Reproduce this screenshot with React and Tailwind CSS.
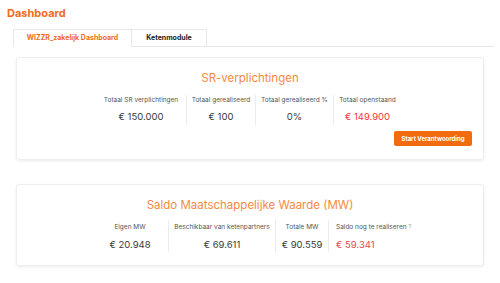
import React from "react";

const srStats = [
  { label: "Totaal SR verplichtingen", value: "€ 150.000", w: "w-[90px]" },
  { label: "Totaal gerealiseerd", value: "€ 100", w: "w-[69px]" },
  { label: "Totaal gerealiseerd %", value: "0%", w: "w-[78px]" },
  { label: "Totaal openstaand", value: "€ 149.900", w: "w-[68px]", red: true },
];

const mwStats = [
  { label: "Eigen MW", value: "€ 20.948", w: "w-[76px]" },
  { label: "Beschikbaar van ketenpartners", value: "€ 69.611", w: "w-[107px]" },
  { label: "Totale MW", value: "€ 90.559", w: "w-[53px]" },
];

export default function App() {
  return (
    <div className="w-[500px] h-[283px] overflow-hidden bg-white font-['Inter',sans-serif] text-[#444]">
      <div className="px-[7px] pt-[6px]">
        <h1 className="text-[11px] leading-[14px] font-bold text-[#f26a1b]">Dashboard</h1>
      </div>

      {/* tabs */}
      <div className="ml-[13px] mr-[6px] mt-[9px] flex border-b border-[#e8e8e8]">
        <div className="-mb-px h-[18px] w-[119px] flex items-center justify-center border border-[#e8e8e8] border-b-white bg-white text-[7px] font-bold text-[#f26a1b]">
          WIZZR_zakelijk Dashboard
        </div>
        <div className="h-[17px] w-[75px] flex items-center justify-center border border-l-0 border-b-0 border-[#e8e8e8] text-[7px] font-bold text-[#222]">
          Ketenmodule
        </div>
      </div>

      {/* SR card */}
      <div className="mx-[16px] mt-[10px] h-[103px] rounded-[3px] border border-[#eeeeee] shadow-[0_1px_3px_rgba(0,0,0,0.08)] pt-[12px]">
        <h2 className="text-center text-[11.5px] leading-[16px] text-[#f58a3f]">SR-verplichtingen</h2>
        <div className="mt-[9px] flex justify-center pr-[3px]">
          {srStats.map((s, i) => (
            <div key={s.label} className={`${s.w} h-[30px] text-center ${i > 0 ? "border-l border-[#ececec]" : ""}`}>
              <div className="text-[6.5px] leading-[10px] text-[#555]">{s.label}</div>
              <div className={`mt-[5px] text-[9.5px] leading-[14px] ${s.red ? "text-[#f2333d]" : "text-[#3a3a3a]"}`}>
                {s.value}
              </div>
            </div>
          ))}
        </div>
        <div className="mt-[6px] flex justify-end pr-[11px]">
          <button className="h-[15px] w-[78px] rounded-[2px] bg-[#f26b0f] text-[6px] font-bold text-white">
            Start Verantwoording
          </button>
        </div>
      </div>

      {/* MW card */}
      <div className="mx-[16px] mt-[24px] h-[82px] rounded-[3px] border border-[#eeeeee] shadow-[0_1px_3px_rgba(0,0,0,0.08)] pt-[12px]">
        <h2 className="text-center text-[11.5px] leading-[16px] text-[#f58a3f]">Saldo Maatschappelijke Waarde (MW)</h2>
        <div className="mt-[7px] flex justify-center pl-[8px]">
          {mwStats.map((s, i) => (
            <div key={s.label} className={`${s.w} h-[32px] text-center ${i > 0 ? "border-l border-[#ececec]" : ""}`}>
              <div className="text-[6.5px] leading-[14px] text-[#555]">{s.label}</div>
              <div className="mt-[4px] text-[9.5px] leading-[14px] text-[#3a3a3a]">{s.value}</div>
            </div>
          ))}
          <div className="w-[88px] h-[32px] pl-[7px] border-l border-[#ececec]">
            <div className="text-[6.5px] leading-[14px] text-[#555]">
              Saldo nog te realiseren <span className="text-[#aaa]">?</span>
            </div>
            <div className="mt-[4px] text-[9.5px] leading-[14px] text-[#e5484d]">€ 59.341</div>
          </div>
        </div>
      </div>
    </div>
  );
}
